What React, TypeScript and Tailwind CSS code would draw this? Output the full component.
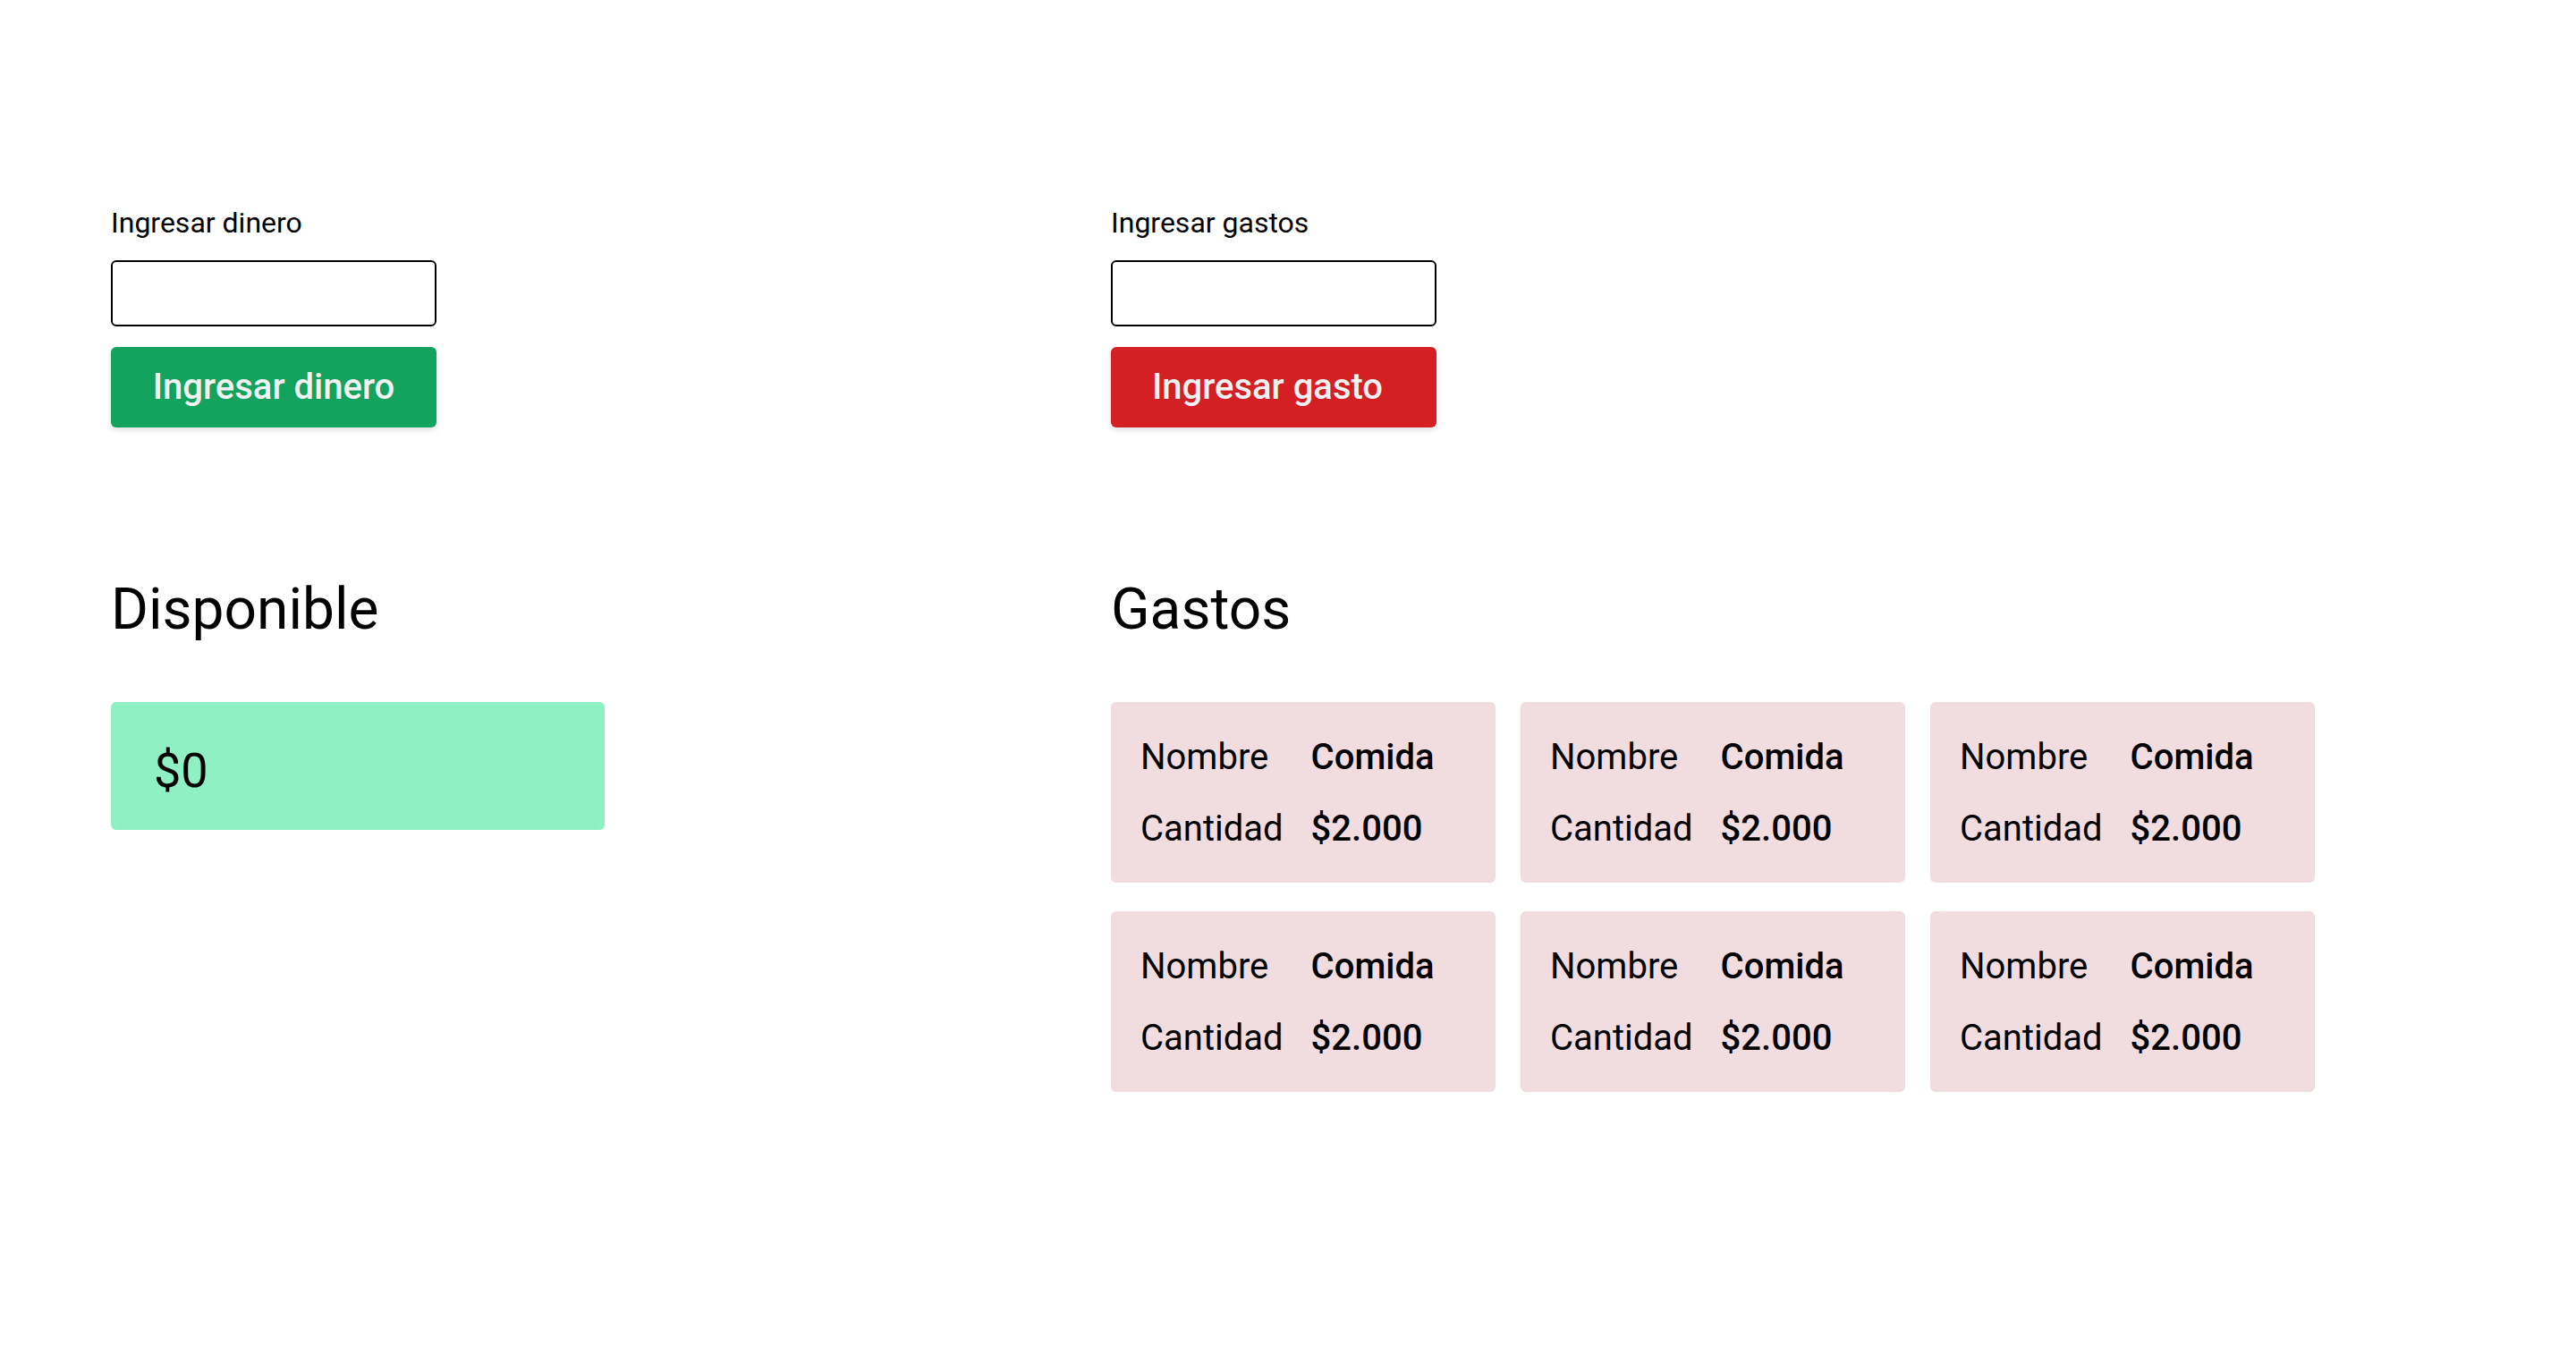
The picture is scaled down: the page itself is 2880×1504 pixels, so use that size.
import React from "react";

const font = { fontFamily: "Roboto, 'Noto Sans', Arial, sans-serif" };

function Card() {
  return (
    <div className="w-[430px] h-[202px] rounded-[6px] bg-[#f1dcdf] pl-[33px] pt-[38px]">
      <div className="grid grid-cols-[auto_auto] justify-start gap-x-[31px] gap-y-[32px] text-[40px] leading-[48px] text-black">
        <span>Nombre</span>
        <span className="font-medium">Comida</span>
        <span>Cantidad</span>
        <span className="font-medium">$2.000</span>
      </div>
    </div>
  );
}

export default function App() {
  return (
    <div className="min-h-[1504px] w-[2880px] bg-white text-black" style={font}>
      <div className="flex pl-[124px] pt-[230px]">
        <div className="w-[1118px] flex flex-col">
          <label className="text-[32px] leading-[38px]">Ingresar dinero</label>
          <input className="mt-[23px] w-[364px] h-[74px] border-2 border-black rounded-[6px] bg-white" />
          <button className="mt-[23px] w-[364px] h-[90px] rounded-[6px] bg-[#14a35e] text-[#f2f2f2] text-[40px] font-medium shadow-[0_3px_6px_rgba(0,0,0,0.12)]">
            Ingresar dinero
          </button>
          <h2 className="mt-[166px] text-[64px] leading-[75px] font-normal">Disponible</h2>
          <div className="mt-[66px] w-[552px] h-[143px] rounded-[6px] bg-[#8ef0c3] flex items-center pl-[48px] pt-[10px]">
            <span className="text-[54px] leading-none">$0</span>
          </div>
        </div>
        <div className="flex flex-col">
          <label className="text-[32px] leading-[38px]">Ingresar gastos</label>
          <input className="mt-[23px] w-[364px] h-[74px] border-2 border-black rounded-[6px] bg-white" />
          <button className="mt-[23px] w-[364px] h-[90px] rounded-[6px] bg-[#d42024] text-[#f2f2f2] text-[40px] font-medium pr-[14px] shadow-[0_3px_6px_rgba(0,0,0,0.12)]">
            Ingresar gasto
          </button>
          <h2 className="mt-[166px] text-[64px] leading-[75px] font-normal">Gastos</h2>
          <div className="mt-[66px] grid grid-cols-[430px_430px_430px] gap-x-[28px] gap-y-[32px]">
            <Card />
            <Card />
            <Card />
            <Card />
            <Card />
            <Card />
          </div>
        </div>
      </div>
    </div>
  );
}
